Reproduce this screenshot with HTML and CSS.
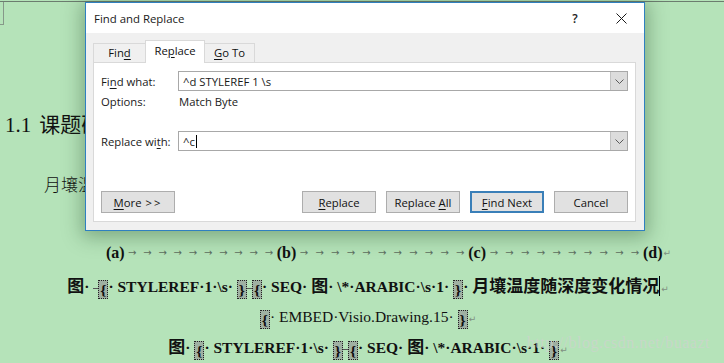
FILE: index.html
```html
<!DOCTYPE html>
<html lang="zh-CN">
<head>
<meta charset="utf-8">
<title>Find and Replace</title>
<link rel="stylesheet" href="styles.css">
</head>
<body>
<main class="doc">
  <div class="topline"></div>
  <div class="corner"></div>
  <h1 class="heading"><span class="num">1.1</span><span class="zh">课题研究背景</span></h1>
  <p class="para"><span class="zh">月壤温度是月球表面重要的物理参数之一</span></p>

  <p class="tabline">
    <b>(a)</b><span class="tab w1"><i>→</i><i>→</i><i>→</i><i>→</i><i>→</i><i>→</i><i>→</i><i>→</i><i>→</i><i>→</i></span><b>(b)</b><span class="tab w2"><i>→</i><i>→</i><i>→</i><i>→</i><i>→</i><i>→</i><i>→</i><i>→</i><i>→</i><i>→</i><i>→</i></span><b>(c)</b><span class="tab w3"><i>→</i><i>→</i><i>→</i><i>→</i><i>→</i><i>→</i><i>→</i><i>→</i><i>→</i><i>→</i></span><b>(d)</b><span class="pm">↵</span>
  </p>

  <p class="cap bold l2"><span class="zh">图</span>·&nbsp;<span class="dash"></span><span class="fb">{</span>·&nbsp;STYLEREF·1·\s·&nbsp;<span class="fb">}</span><span class="dash"></span><span class="fb">{</span>·&nbsp;SEQ·&nbsp;<span class="zh">图</span>·&nbsp;\*·ARABIC·\s·1·&nbsp;<span class="fb">}</span>·&nbsp;<span class="zh">月壤温度随深度变化情况</span><span class="cursor"></span><span class="pm">↵</span></p>

  <p class="cap embed l3"><span class="fb">{</span>·&nbsp;EMBED·Visio.Drawing.15·&nbsp;<span class="fb">}</span><span class="pm">↵</span></p>

  <p class="cap bold l4"><span class="zh">图</span>·&nbsp;<span class="fb">{</span>·&nbsp;STYLEREF·1·\s·&nbsp;<span class="fb">}</span><span class="dash"></span><span class="fb">{</span>·&nbsp;SEQ·&nbsp;<span class="zh">图</span>·&nbsp;\*·ARABIC·\s·1·&nbsp;<span class="fb">}</span><span class="pm">↵</span></p>

  <div class="watermark">http://blog.csdn.net/buaazt</div>
</main>

<section class="dialog">
  <header class="titlebar">
    <span class="title">Find and Replace</span>
    <span class="capbtn help">?</span>
    <span class="capbtn close"><svg width="11" height="11" viewBox="0 0 11 11"><path d="M0.5 0.5 L10.5 10.5 M10.5 0.5 L0.5 10.5" stroke="#1a1a1a" stroke-width="1" fill="none"/></svg></span>
  </header>
  <div class="dbody">
    <nav class="tabs">
      <span class="tab-item t-find">Fin<u>d</u></span>
      <span class="tab-item t-replace active">Re<u>p</u>lace</span>
      <span class="tab-item t-goto"><u>G</u>o To</span>
    </nav>
    <div class="panel">
      <div class="row field">
        <span class="label">Fi<u>n</u>d what:</span>
        <div class="combo"><span class="val">^d STYLEREF 1 \s</span><span class="drop"><svg width="9" height="5" viewBox="0 0 9 5"><path d="M0.5 0.5 L4.5 4.5 L8.5 0.5" stroke="#5a5a5a" stroke-width="1" fill="none"/></svg></span></div>
      </div>
      <div class="row opts">
        <span class="label">Options:</span>
        <span class="optval">Match Byte</span>
      </div>
      <div class="row field repl">
        <span class="label">Replace wi<u>t</u>h:</span>
        <div class="combo"><span class="val">^c<span class="caret"></span></span><span class="drop"><svg width="9" height="5" viewBox="0 0 9 5"><path d="M0.5 0.5 L4.5 4.5 L8.5 0.5" stroke="#5a5a5a" stroke-width="1" fill="none"/></svg></span></div>
      </div>
      <div class="buttons">
        <button class="btn"><u>M</u>ore <span class="gt">&gt;&gt;</span></button>
        <span class="spacer"></span>
        <button class="btn"><u>R</u>eplace</button>
        <button class="btn">Replace <u>A</u>ll</button>
        <button class="btn default"><u>F</u>ind Next</button>
        <button class="btn">Cancel</button>
      </div>
    </div>
  </div>
</section>
</body>
</html>
```

FILE: styles.css
```css
* { box-sizing: border-box; margin: 0; padding: 0; }
html, body { width: 724px; height: 363px; overflow: hidden; }
body {
  background: #b5e3b9;
  font-family: "Liberation Serif", "Noto Sans CJK SC", serif;
  color: #111;
  position: relative;
}

/* ---------- document ---------- */
.doc { position: relative; height: 363px; padding-top: 1px; }
.topline { height: 1px; background: #6c7c6f; }
.corner {
  width: 4px; height: 23px;
  border-right: 1px solid #869889;
  border-bottom: 1px solid #869889;
}
.zh { font-family: "Noto Sans CJK SC", sans-serif; }
.heading {
  margin-top: 84px;
  padding-left: 5px;
  font-size: 21px;
  font-weight: normal;
  line-height: 28px;
  height: 28px;
  white-space: nowrap;
}
.heading .num { margin-right: 8px; }
.para {
  margin-top: 35px;
  padding-left: 44px;
  font-size: 17px;
  line-height: 24px;
  height: 24px;
  white-space: nowrap;
}
.para .zh { font-weight: 300; }

.tabline {
  margin-top: 45px;
  padding-left: 106px;
  font-size: 16px;
  line-height: 24px;
  height: 24px;
  white-space: nowrap;
  display: flex;
  align-items: center;
}
.tabline b { font-weight: bold; }
.tab {
  display: inline-flex;
  justify-content: space-around;
  align-items: center;
}
.tab i {
  font-style: normal;
  font-family: "DejaVu Sans", sans-serif;
  font-size: 10px;
  color: #5d6d60;
}
.tab.w1 { width: 152px; }
.tab.w2 { width: 172px; }
.tab.w3 { width: 157px; }
.pm {
  font-family: "DejaVu Sans", sans-serif;
  font-size: 9px;
  font-weight: normal;
  color: #7e8f81;
  margin-left: 1px;
}

.cap {
  text-align: center;
  padding-left: 12px;
  white-space: nowrap;
  font-size: 15.5px;
}
.cap.bold { font-weight: bold; }
.cap.bold .zh { font-size: 17px; font-weight: bold; }
.l2 { margin-top: 7px; line-height: 26px; height: 26px; }
.l3 { margin-top: 7px; line-height: 24px; height: 24px; font-size: 15.5px; }
.l4 { margin-top: 4px; line-height: 26px; height: 26px; }

.fb {
  display: inline-block;
  border: 1px dotted #222;
  background: #9fb0a2;
  padding: 0 1px;
  line-height: 17px;
  font-weight: bold;
  vertical-align: -3px;
}
.dash {
  display: inline-block;
  width: 5px; height: 1px;
  background: #555;
  vertical-align: middle;
}
.cursor {
  display: inline-block;
  width: 1px; height: 20px;
  background: #000;
  vertical-align: -4px;
}

.watermark {
  position: absolute;
  right: 14px;
  top: 334px;
  font-family: "Liberation Serif", serif;
  font-size: 16px;
  color: rgba(205, 212, 206, 0.75);
  letter-spacing: 0.5px;
}

/* ---------- dialog ---------- */
.dialog {
  position: absolute;
  left: 85px;
  top: 2px;
  width: 560px;
  height: 229px;
  border: 1px solid #2f80c0;
  background: #f0f0f0;
  box-shadow: 0 3px 18px 3px rgba(20, 60, 25, 0.35);
  font-family: "Open Sans", "Noto Sans", sans-serif;
  font-size: 11.3px;
  color: #1a1a1a;
  display: flex;
  flex-direction: column;
}
.titlebar {
  height: 30px;
  background: #fff;
  display: flex;
  align-items: center;
  flex: none;
}
.title { padding-left: 8px; font-size: 11.4px; color: #1a1a1a; }
.capbtn {
  width: 46px; height: 30px;
  display: flex; align-items: center; justify-content: center;
}
.help { margin-left: auto; font-size: 12px; font-weight: 600; color: #222; }
.close svg { display: block; }

.dbody {
  flex: 1;
  padding: 7px 8px 8px 7px;
  display: flex;
  flex-direction: column;
}
.tabs { display: flex; height: 22px; align-items: flex-end; position: relative; z-index: 1; flex: none; }
.tab-item {
  height: 19px;
  border: 1px solid #d9d9d9;
  border-bottom: none;
  background: #f0f0f0;
  text-align: center;
  line-height: 18px;
  color: #111;
}
.t-find { width: 52px; border-right: none; }
.t-replace { width: 60px; }
.t-goto { width: 50px; border-left: none; }
.tab-item.active {
  height: 23px;
  margin-bottom: -1px;
  background: #fff;
  line-height: 20px;
}
.panel {
  flex: 1;
  background: #fff;
  border: 1px solid #d9d9d9;
  padding: 8px 7px 0 7px;
  display: flex;
  flex-direction: column;
}
.row { display: flex; align-items: center; }
.row .label { width: 77px; flex: none; }
.field { height: 20px; }
.combo {
  flex: 1;
  height: 20px;
  border: 1px solid #a8a8a8;
  display: flex;
  align-items: center;
  background: #fff;
}
.val { flex: 1; padding-left: 4px; display: flex; align-items: center; }
.caret { display: inline-block; width: 1px; height: 13px; background: #000; margin-left: 1px; }
.drop {
  width: 17px; height: 18px;
  background: #dcdcdc;
  border-left: 1px solid #c2c2c2;
  display: flex; align-items: center; justify-content: center;
}
.opts { height: 18px; margin-top: 1px; }
.optval { padding-left: 1px; }
.repl { margin-top: 21px; }
.buttons { display: flex; margin-top: 40px; gap: 10px; }
.spacer { flex: 1; }
.btn {
  width: 74px; height: 22px;
  background: #e1e1e1;
  border: 1px solid #adadad;
  font: inherit;
  color: #111;
  text-align: center;
  line-height: 19px;
  white-space: nowrap;
}
.btn.default { border: 2px solid #3a7fb8; line-height: 17px; }
.gt { letter-spacing: 2px; margin-left: 1px; }
u { text-decoration: underline; text-underline-offset: 2px; }
```
